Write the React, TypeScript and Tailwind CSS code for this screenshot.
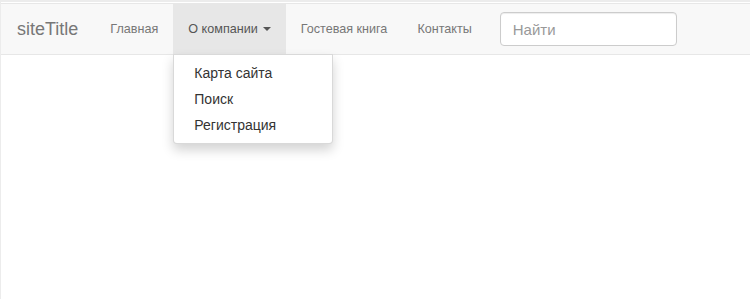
import { useState } from "react";

export default function App() {
  const [open] = useState(true);

  const links = [
    { id: "home", label: "Главная" },
    { id: "about", label: "О компании", dropdown: true },
    { id: "guest", label: "Гостевая книга" },
    { id: "contacts", label: "Контакты" },
  ];

  const subItems = ["Карта сайта", "Поиск", "Регистрация"];

  return (
    <div className="min-h-[299px] w-[750px] bg-white border-l border-[#ececec] font-['Liberation_Sans',Arial,sans-serif]">
      <div className="h-[2px] bg-[#ececec]" />
      <div className="h-px bg-white" />
      <nav className="border-y border-[#e7e7e7] bg-[#f8f8f8]">
        <div className="flex h-[50px] items-center">
          <a className="pl-[16px] pr-[17px] text-[18px] leading-[50px] text-[#777]">siteTitle</a>
          <ul className="flex h-full">
            {links.map((link) => (
              <li key={link.id} className="relative h-full">
                <a
                  className={`flex h-full items-center px-[15px] text-[12.6px] ${
                    link.dropdown && open ? "bg-[#e7e7e7] text-[#555]" : "text-[#777]"
                  }`}
                >
                  {link.label}
                  {link.dropdown && (
                    <span className="ml-[5px] inline-block h-0 w-0 border-x-4 border-t-4 border-x-transparent border-t-[#555]" />
                  )}
                </a>
                {link.dropdown && open && (
                  <ul className="absolute left-0 top-full z-10 w-[160px] rounded-b border border-black/15 bg-white py-[5px] shadow-[0_6px_12px_rgba(0,0,0,0.175)]">
                    {subItems.map((item) => (
                      <li key={item}>
                        <a className="block px-5 py-[3px] text-[14px] leading-[20px] text-[#333]">{item}</a>
                      </li>
                    ))}
                  </ul>
                )}
              </li>
            ))}
          </ul>
          <form className="pl-[13px]">
            <input
              placeholder="Найти"
              className="h-[34px] w-[177px] rounded border border-[#ccc] bg-white px-3 text-[15px] text-[#555] shadow-[inset_0_1px_1px_rgba(0,0,0,0.075)] outline-none placeholder:text-[#999]"
            />
          </form>
        </div>
      </nav>
    </div>
  );
}
